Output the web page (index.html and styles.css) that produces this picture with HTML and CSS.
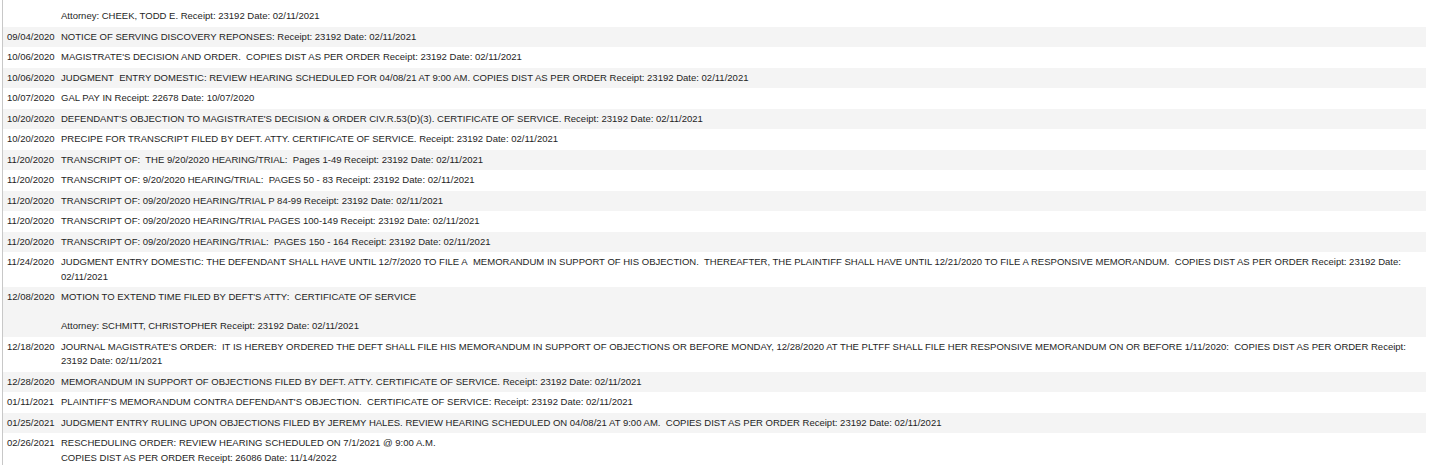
FILE: index.html
```html
<!DOCTYPE html>
<html>
<head>
<meta charset="utf-8">
<link rel="stylesheet" href="styles.css">
</head>
<body>
<div class="docket">
<table class="entries">
<tbody>
<tr class="row first"><td class="date"></td><td class="desc">Attorney: CHEEK, TODD E. Receipt: 23192 Date: 02/11/2021</td></tr>
<tr class="row"><td class="date">09/04/2020</td><td class="desc">NOTICE OF SERVING DISCOVERY REPONSES: Receipt: 23192 Date: 02/11/2021</td></tr>
<tr class="row"><td class="date">10/06/2020</td><td class="desc">MAGISTRATE'S DECISION AND ORDER.&nbsp; COPIES DIST AS PER ORDER Receipt: 23192 Date: 02/11/2021</td></tr>
<tr class="row"><td class="date">10/06/2020</td><td class="desc">JUDGMENT&nbsp; ENTRY DOMESTIC: REVIEW HEARING SCHEDULED FOR 04/08/21 AT 9:00 AM. COPIES DIST AS PER ORDER Receipt: 23192 Date: 02/11/2021</td></tr>
<tr class="row"><td class="date">10/07/2020</td><td class="desc">GAL PAY IN Receipt: 22678 Date: 10/07/2020</td></tr>
<tr class="row"><td class="date">10/20/2020</td><td class="desc">DEFENDANT'S OBJECTION TO MAGISTRATE'S DECISION &amp; ORDER CIV.R.53(D)(3). CERTIFICATE OF SERVICE. Receipt: 23192 Date: 02/11/2021</td></tr>
<tr class="row"><td class="date">10/20/2020</td><td class="desc">PRECIPE FOR TRANSCRIPT FILED BY DEFT. ATTY. CERTIFICATE OF SERVICE. Receipt: 23192 Date: 02/11/2021</td></tr>
<tr class="row"><td class="date">11/20/2020</td><td class="desc">TRANSCRIPT OF:&nbsp; THE 9/20/2020 HEARING/TRIAL:&nbsp; Pages 1-49 Receipt: 23192 Date: 02/11/2021</td></tr>
<tr class="row"><td class="date">11/20/2020</td><td class="desc">TRANSCRIPT OF: 9/20/2020 HEARING/TRIAL:&nbsp; PAGES 50 - 83 Receipt: 23192 Date: 02/11/2021</td></tr>
<tr class="row"><td class="date">11/20/2020</td><td class="desc">TRANSCRIPT OF: 09/20/2020 HEARING/TRIAL P 84-99 Receipt: 23192 Date: 02/11/2021</td></tr>
<tr class="row"><td class="date">11/20/2020</td><td class="desc">TRANSCRIPT OF: 09/20/2020 HEARING/TRIAL PAGES 100-149 Receipt: 23192 Date: 02/11/2021</td></tr>
<tr class="row"><td class="date">11/20/2020</td><td class="desc">TRANSCRIPT OF: 09/20/2020 HEARING/TRIAL:&nbsp; PAGES 150 - 164 Receipt: 23192 Date: 02/11/2021</td></tr>
<tr class="row"><td class="date">11/24/2020</td><td class="desc">JUDGMENT ENTRY DOMESTIC: THE DEFENDANT SHALL HAVE UNTIL 12/7/2020 TO FILE A&nbsp; MEMORANDUM IN SUPPORT OF HIS OBJECTION.&nbsp; THEREAFTER, THE PLAINTIFF SHALL HAVE UNTIL 12/21/2020 TO FILE A RESPONSIVE MEMORANDUM.&nbsp; COPIES DIST AS PER ORDER Receipt: 23192 Date: 02/11/2021</td></tr>
<tr class="row"><td class="date">12/08/2020</td><td class="desc">MOTION TO EXTEND TIME FILED BY DEFT'S ATTY:&nbsp; CERTIFICATE OF SERVICE<br><br>Attorney: SCHMITT, CHRISTOPHER Receipt: 23192 Date: 02/11/2021</td></tr>
<tr class="row"><td class="date">12/18/2020</td><td class="desc">JOURNAL MAGISTRATE'S ORDER:&nbsp; IT IS HEREBY ORDERED THE DEFT SHALL FILE HIS MEMORANDUM IN SUPPORT OF OBJECTIONS OR BEFORE MONDAY, 12/28/2020 AT THE PLTFF SHALL FILE HER RESPONSIVE MEMORANDUM ON OR BEFORE 1/11/2020:&nbsp; COPIES DIST AS PER ORDER Receipt: 23192 Date: 02/11/2021</td></tr>
<tr class="row"><td class="date">12/28/2020</td><td class="desc">MEMORANDUM IN SUPPORT OF OBJECTIONS FILED BY DEFT. ATTY. CERTIFICATE OF SERVICE. Receipt: 23192 Date: 02/11/2021</td></tr>
<tr class="row"><td class="date">01/11/2021</td><td class="desc">PLAINTIFF'S MEMORANDUM CONTRA DEFENDANT'S OBJECTION.&nbsp; CERTIFICATE OF SERVICE: Receipt: 23192 Date: 02/11/2021</td></tr>
<tr class="row"><td class="date">01/25/2021</td><td class="desc">JUDGMENT ENTRY RULING UPON OBJECTIONS FILED BY JEREMY HALES. REVIEW HEARING SCHEDULED ON 04/08/21 AT 9:00 AM.&nbsp; COPIES DIST AS PER ORDER Receipt: 23192 Date: 02/11/2021</td></tr>
<tr class="row"><td class="date">02/26/2021</td><td class="desc">RESCHEDULING ORDER: REVIEW HEARING SCHEDULED ON 7/1/2021 @ 9:00 A.M.<br>COPIES DIST AS PER ORDER Receipt: 26086 Date: 11/14/2022</td></tr>
</tbody>
</table>
</div>
</body>
</html>
```

FILE: styles.css
```css
html, body {
  margin: 0;
  padding: 0;
  background: #ffffff;
}

.docket {
  margin-left: 2px;
  border-left: 1px solid #c8c8c8;
  padding-right: 30px;
  font-family: "Liberation Sans", Arial, sans-serif;
  font-size: 9.52px;
  color: #1e1e1e;
}

.entries {
  width: 100%;
  border-collapse: collapse;
}

.row:nth-child(odd) {
  background: #ffffff;
}

.row:nth-child(even) {
  background: #f4f4f4;
}

.entries td {
  padding: 3px 0;
  line-height: 14.5px;
  vertical-align: top;
}

.entries td.date {
  width: 50px;
  padding-left: 4px;
  padding-right: 4px;
  white-space: nowrap;
}

.row.first td {
  padding-top: 9px;
}
```
